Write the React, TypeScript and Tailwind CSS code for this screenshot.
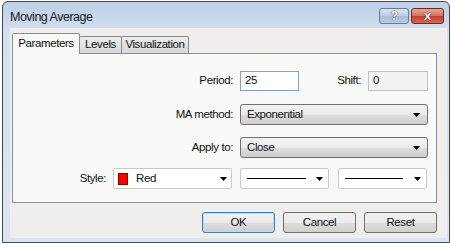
import React from "react";

function Arrow() {
  return (
    <svg width="7" height="4" viewBox="0 0 7 4" className="shrink-0">
      <path d="M0 0H7L3.5 4Z" fill="#000" />
    </svg>
  );
}

function Combo({ text }: { text: string }) {
  return (
    <div className="w-[188px] h-[21px] rounded-[3px] border border-[#707070] bg-[linear-gradient(#f3f3f3,#ebebeb_50%,#dddddd_51%,#cfcfcf)] flex items-center pl-[6px] pr-[7px] justify-between">
      <span className="text-[#111]">{text}</span>
      <Arrow />
    </div>
  );
}

function Btn({ text, def }: { text: string; def?: boolean }) {
  return (
    <div
      className={
        "w-[73px] h-[21px] rounded-[3px] border flex items-center justify-center text-[#111] bg-[linear-gradient(#f2f2f2,#ebebeb_50%,#dddddd_51%,#cfcfcf)] " +
        (def ? "border-[#3c7fb1] shadow-[inset_0_0_0_1px_#b9dcf3]" : "border-[#707070]")
      }
    >
      {text}
    </div>
  );
}

export default function App() {
  return (
    <div className="w-[451px] h-[244px] bg-white pt-[1px] pl-[2px] overflow-hidden font-['Liberation_Sans',Arial,sans-serif] text-[11.5px] tracking-[-0.4px]">
      <div className="w-[448px] h-[242px] border border-[#3f4b59] rounded-t-[6px] bg-[linear-gradient(#bccfe6,#d3e0ef_30px,#dbe5f1)] flex flex-col">
        {/* title bar */}
        <div className="h-[26px] flex items-start relative">
          <span className="ml-[7px] mt-[6px] text-[12.5px] text-[#1a1a1a] tracking-[-0.5px]">Moving Average</span>
          <div className="ml-auto mr-[5px] mt-[6px] flex gap-[2px]">
            <div className="w-[30px] h-[16px] rounded-[3px] border border-[#6a7c93] bg-[linear-gradient(#d9e4f1,#bccde2_50%,#a6bbd6_51%,#b9cce3)] flex items-center justify-center">
              <span className="text-[12px] font-bold text-white leading-none [text-shadow:0_0_1px_#2c3e55,0_0_1px_#2c3e55]">?</span>
            </div>
            <div className="w-[33px] h-[16px] rounded-[3px] border border-[#6e2a22] bg-[linear-gradient(#e8a796,#d1705c_50%,#c0402f_51%,#d26a4f)] flex items-center justify-center">
              <span className="text-[13px] font-bold text-white leading-none mt-[-2px] [text-shadow:0_0_1px_#3a1008,0_0_1px_#3a1008]">x</span>
            </div>
          </div>
        </div>
        {/* client */}
        <div className="ml-[7px] mr-[2px] h-[210px] bg-[#efeeed] pt-[5px] pl-[2px] flex flex-col text-[#111]">
          {/* tabs */}
          <div className="h-[20px] flex items-end relative z-10">
            <div className="w-[68px] h-[21px] mb-[-1px] border border-b-0 border-[#8a8d93] rounded-t-[2px] bg-[#f8f8f7] flex items-center justify-center pb-[1px]">
              Parameters
            </div>
            <div className="w-[43px] h-[17px] ml-[-1px] border border-[#8a8d93] border-b-0 rounded-t-[2px] bg-[linear-gradient(#ececec,#d8d8d8)] flex items-center justify-center">
              Levels
            </div>
            <div className="w-[68px] h-[17px] ml-[-1px] border border-[#8a8d93] border-b-0 rounded-t-[2px] bg-[linear-gradient(#ececec,#d8d8d8)] flex items-center justify-center">
              Visualization
            </div>
          </div>
          {/* panel */}
          <div className="w-[425px] h-[150px] border border-[#8a8d93] bg-[#f8f8f7] flex flex-col pt-[17px]">
            <div className="h-[20px] flex items-center">
              <div className="w-[220px] text-right">Period:</div>
              <div className="ml-[7px] w-[59px] h-[20px] border border-[#7da2ce] bg-white flex items-center pl-[4px]">25</div>
              <div className="w-[62px] text-right text-[#111]">Shift:</div>
              <div className="ml-[7px] w-[60px] h-[20px] border border-[#c2c2c2] bg-[#f2f2f2] flex items-center pl-[4px] text-[#111]">0</div>
            </div>
            <div className="h-[21px] mt-[13px] flex items-center">
              <div className="w-[220px] text-right">MA method:</div>
              <div className="ml-[7px]"><Combo text="Exponential" /></div>
            </div>
            <div className="h-[21px] mt-[12px] flex items-center">
              <div className="w-[220px] text-right">Apply to:</div>
              <div className="ml-[7px]"><Combo text="Close" /></div>
            </div>
            <div className="h-[21px] mt-[10px] flex items-center">
              <div className="w-[93px] text-right">Style:</div>
              <div className="ml-[7px] w-[119px] h-[21px] border border-[#c9c9c9] rounded-[2px] bg-white flex items-center pl-[4px] pr-[4px]">
                <div className="w-[10px] h-[12px] bg-[#ff0000] border border-[#8a0000]" />
                <span className="ml-[8px]">Red</span>
                <div className="ml-auto"><Arrow /></div>
              </div>
              <div className="ml-[8px] w-[89px] h-[21px] border border-[#c9c9c9] rounded-[2px] bg-white flex items-center pl-[6px] pr-[5px]">
                <div className="w-[59px] h-[1px] bg-black" />
                <div className="ml-auto"><Arrow /></div>
              </div>
              <div className="ml-[9px] w-[89px] h-[21px] border border-[#c9c9c9] rounded-[2px] bg-white flex items-center pl-[6px] pr-[5px]">
                <div className="w-[58px] h-[1px] bg-black" />
                <div className="ml-auto"><Arrow /></div>
              </div>
            </div>
          </div>
          {/* buttons */}
          <div className="mt-[9px] flex justify-end gap-[8px] pr-[10px]">
            <Btn text="OK" def />
            <Btn text="Cancel" />
            <Btn text="Reset" />
          </div>
        </div>
      </div>
    </div>
  );
}
